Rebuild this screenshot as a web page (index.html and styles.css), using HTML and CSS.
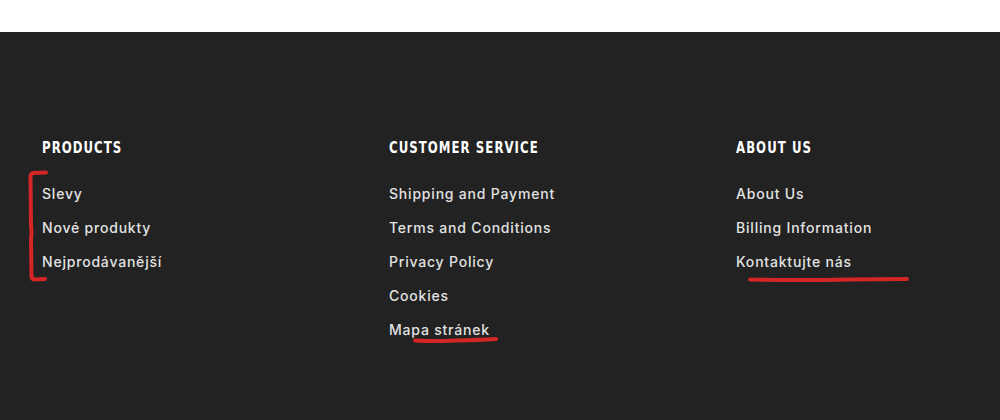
FILE: index.html
```html
<!DOCTYPE html>
<html lang="cs">
<head>
<meta charset="utf-8">
<title>Footer</title>
<link rel="stylesheet" href="styles.css">
</head>
<body>
<div class="topbar"></div>
<footer class="footer">
  <div class="cols">
    <section class="col">
      <h3 class="col-title"><span>PRODUCTS</span></h3>
      <ul class="links">
        <li><a href="#">Slevy</a></li>
        <li><a href="#">Nové produkty</a></li>
        <li><a href="#">Nejprodávanější</a></li>
      </ul>
    </section>
    <section class="col">
      <h3 class="col-title"><span>CUSTOMER SERVICE</span></h3>
      <ul class="links">
        <li><a href="#">Shipping and Payment</a></li>
        <li><a href="#">Terms and Conditions</a></li>
        <li><a href="#">Privacy Policy</a></li>
        <li><a href="#">Cookies</a></li>
        <li><a href="#">Mapa stránek</a></li>
      </ul>
    </section>
    <section class="col">
      <h3 class="col-title"><span>ABOUT US</span></h3>
      <ul class="links">
        <li><a href="#">About Us</a></li>
        <li><a href="#">Billing Information</a></li>
        <li><a href="#">Kontaktujte nás</a></li>
      </ul>
    </section>
  </div>
  <svg class="marks" width="1000" height="388" viewBox="0 32 1000 388" xmlns="http://www.w3.org/2000/svg">
    <g fill="none" stroke="#d42626" stroke-width="4" stroke-linecap="round" stroke-linejoin="round">
      <path d="M46 172.5 L33 173 Q30.5 173.5 30.5 177 L31 226 Q32 232 31 240 L31.5 276 Q31.5 279.5 35 279.5 L45 279"/>
      <path d="M415 340.5 Q430 341.5 455 340.5 Q480 340 496 339"/>
      <path d="M750 279.5 Q800 280.5 850 279.5 L907 279"/>
    </g>
  </svg>
</footer>
</body>
</html>
```

FILE: styles.css
```css
html, body {
  margin: 0;
  padding: 0;
  background: #ffffff;
}

.topbar {
  height: 32px;
  background: #ffffff;
}

.footer {
  position: relative;
  background: #212221;
  height: 388px;
  box-sizing: border-box;
  padding: 106px 0 0 42px;
}

.cols {
  display: grid;
  grid-template-columns: 347px 347px 1fr;
}

.col-title {
  margin: 0 0 26px 0;
  font-family: "DejaVu Sans Condensed", "Liberation Sans", sans-serif;
  font-weight: 700;
  font-size: 15px;
  line-height: 20px;
  letter-spacing: 1.2px;
  color: #ffffff;
}

.col-title span {
  display: inline-block;
  transform: scaleX(0.87);
  transform-origin: left center;
  white-space: nowrap;
}

.links {
  list-style: none;
  margin: 0;
  padding: 0;
  display: flex;
  flex-direction: column;
  gap: 14px;
}

.links a {
  display: block;
  font-family: Inter, "DejaVu Sans", sans-serif;
  font-size: 14px;
  line-height: 20px;
  font-weight: 500;
  letter-spacing: 0.8px;
  color: #e2e2e2;
  text-decoration: none;
}

.marks {
  position: absolute;
  left: 0;
  top: 0;
  pointer-events: none;
}
```
